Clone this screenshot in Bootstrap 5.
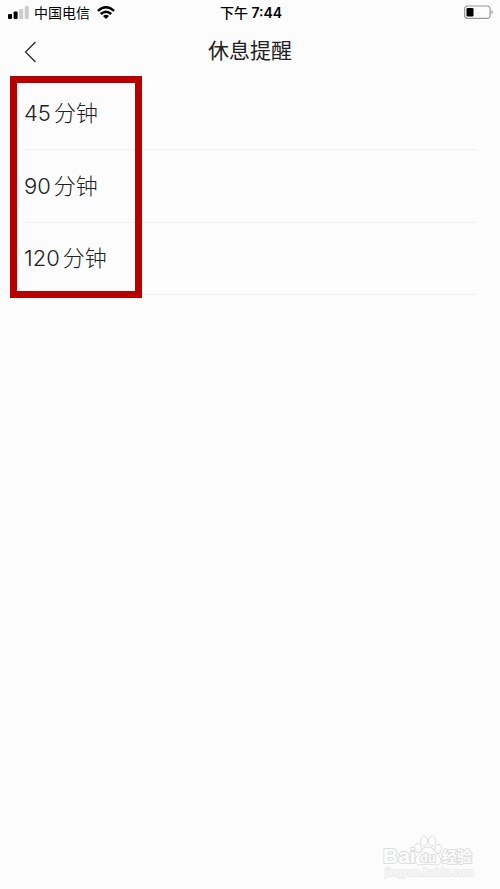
<!DOCTYPE html>
<html lang="zh-CN">
<head>
<meta charset="utf-8">
<meta name="viewport" content="width=device-width, initial-scale=1">
<title>休息提醒</title>
<link href="https://cdn.jsdelivr.net/npm/bootstrap@5.3.0/dist/css/bootstrap.min.css" rel="stylesheet">
<style>
body { background: #fcfcfc; color: #222; font-family: Inter, "Noto Sans CJK SC", sans-serif; }
.status-bar { height: 25px; padding: 0 6px 0 8px; font-size: 14px; line-height: 24px; color: #000; }
.status-side { flex: 1 1 0; }
.carrier { margin: 0 7px 0 5px; }
.status-time { font-weight: 600; }
.status-time .period { font-weight: 500; }
.title-bar { height: 52px; padding: 0 24px; }
.title-bar h1 { font-size: 21px; line-height: 52px; font-weight: 400; }
.back-btn { line-height: 0; color: #222; }
.option-wrap { padding: 0 24px; }
.option-list { --bs-list-group-bg: transparent; --bs-list-group-border-color: #f0f0f0; --bs-list-group-color: #222; }
.option-list .list-group-item { height: 73px; padding: 0; border-width: 0 0 1px; font-size: 22px; line-height: 73px; font-weight: 300; }
.option-list .list-group-item:last-child { height: 72px; line-height: 71px; }
.option-list .num { margin-right: 3px; }
.highlight { top: -1px; right: auto; bottom: -3px; left: 10px; width: 132px; border: 7px solid #b80000; pointer-events: none; }
.watermark { padding: 0 26px 8px 0; font-family: "Liberation Sans", "Noto Sans CJK SC", sans-serif; }
.watermark svg { display: block; overflow: visible; }
.watermark text { stroke: #dcdcdc; stroke-width: 2px; paint-order: stroke; stroke-linejoin: round; fill: #fdfdfd; }
.watermark .site { stroke: #eaeaea; }
</style>
</head>
<body class="d-flex flex-column min-vh-100">
<header>
  <div class="status-bar d-flex align-items-center">
    <div class="status-side d-flex align-items-center">
      <svg width="21" height="13" viewBox="0 0 21 13" aria-hidden="true"><rect y="8" width="4" height="5" rx="1"/><rect x="5.6" y="5.5" width="4" height="7.5" rx="1"/><g fill="#ccc"><rect x="11.2" y="3" width="4" height="10" rx="1"/><rect x="16.8" width="4" height="13" rx="1"/></g></svg>
      <span class="carrier">中国电信</span>
      <svg width="18" height="13" viewBox="0 0 18 13" fill="none" stroke="#000" stroke-width="2.5" aria-hidden="true"><path d="M.9 4.9Q9-2.5 17.1 4.9M3.8 8Q9 3.4 14.2 8"/><path d="M9 13 6 10Q9 7.7 12 10Z" fill="#000" stroke="none"/></svg>
    </div>
    <div class="status-time"><span class="period">下午</span> 7:44</div>
    <div class="status-side d-flex justify-content-end">
      <svg width="30" height="15" viewBox="0 0 30 15" aria-hidden="true"><rect x=".6" y="1" width="25.5" height="12.4" rx="3.2" fill="none" stroke="#999" stroke-width="1.2"/><rect x="2.5" y="3" width="7" height="8.5" rx="1.2"/><path d="M27.6 5Q30 7.2 27.6 9.4Z" fill="#888"/></svg>
    </div>
  </div>
  <nav class="title-bar d-flex align-items-center" aria-label="页面导航">
    <div class="status-side"><button type="button" class="back-btn btn p-0 border-0" aria-label="返回"><svg width="13" height="22" viewBox="0 0 13 22" fill="none" stroke="currentColor" stroke-width="1.2"><path d="M11.5 1 1.5 11 11.5 21"/></svg></button></div>
    <h1 class="m-0">休息提醒</h1>
    <div class="status-side"></div>
  </nav>
</header>
<main class="position-relative option-wrap">
  <div class="list-group rounded-0 option-list">
    <button type="button" class="list-group-item list-group-item-action"><span class="num">45</span>分钟</button>
    <button type="button" class="list-group-item list-group-item-action"><span class="num">90</span>分钟</button>
    <button type="button" class="list-group-item list-group-item-action"><span class="num">120</span>分钟</button>
  </div>
  <div class="highlight position-absolute"></div>
</main>
<footer class="watermark mt-auto d-flex justify-content-end">
  <svg width="91" height="46" viewBox="0 0 91 46" role="img" aria-label="Baidu 经验">
    <text x="0" y="28" font-size="21" font-weight="700">Bai</text>
    <g fill="#fdfdfd" stroke="#dedede"><ellipse cx="35" cy="13" rx="3.3" ry="4.5" transform="rotate(-15 35 13)"/><ellipse cx="41" cy="6" rx="3.5" ry="5"/><ellipse cx="49" cy="6" rx="3.5" ry="5"/><ellipse cx="55" cy="14" rx="3.3" ry="4.5" transform="rotate(15 55 14)"/><path d="M45 12C39 12 38 18 34 21 30 26 33 31 38 30Q45 28 52 30C58 31 60 25 56 21 52 18 51 12 45 12Z"/></g>
    <text x="37" y="27" font-size="13" font-weight="700">du</text>
    <text x="59" y="27" font-size="15" font-weight="700">经验</text>
    <text class="site" x="2" y="41" font-size="11">jingyan.baidu.com</text>
  </svg>
</footer>
<script src="https://cdn.jsdelivr.net/npm/bootstrap@5.3.0/dist/js/bootstrap.bundle.min.js"></script>
</body>
</html>
